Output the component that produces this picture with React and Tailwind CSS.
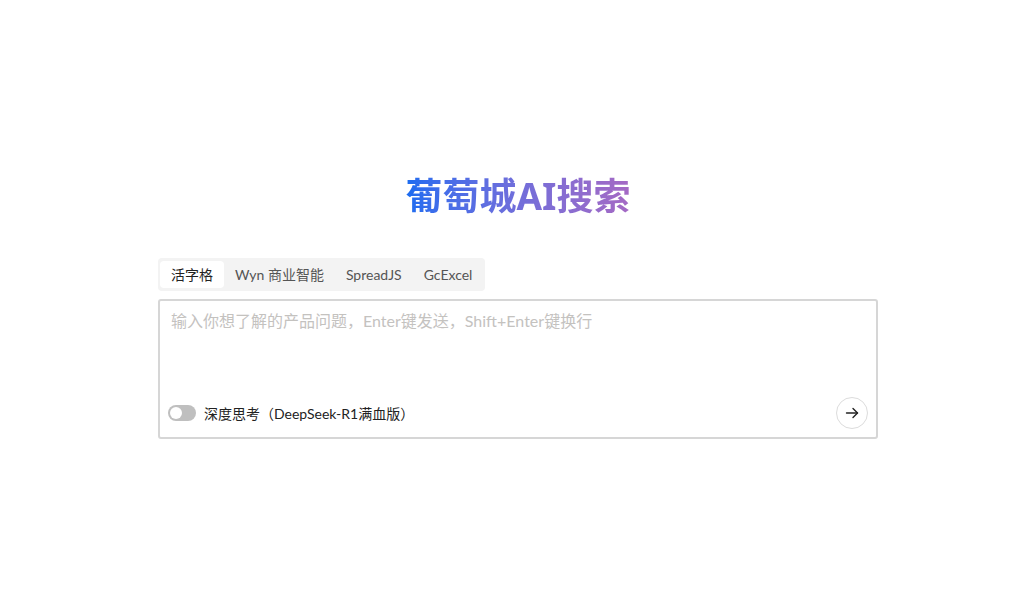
import React, { useState } from 'react';

const FONT = 'Lato, "Noto Sans CJK SC", sans-serif';
const TITLE_FONT = '"Noto Sans", "Noto Sans CJK SC", sans-serif';

const tabs = ['活字格', 'Wyn 商业智能', 'SpreadJS', 'GcExcel'];

export default function App() {
  const [active, setActive] = useState(0);
  const [deep, setDeep] = useState(false);

  return (
    <div className="min-h-screen w-full bg-white pl-[5px]" style={{ fontFamily: FONT }}>
      <div className="mx-auto flex w-[720px] flex-col pt-[169px]">
        <h1
          className="self-center bg-gradient-to-r from-[#1a6cf0] to-[#a569c4] bg-clip-text text-center text-[37px] font-bold leading-[54px] text-transparent"
          style={{ fontFamily: TITLE_FONT }}
        >
          葡萄城AI搜索
        </h1>

        <div className="mt-[35px] flex">
          <div className="flex items-center rounded-[4px] bg-[#f3f3f3] px-[2px] py-[3px]">
            {tabs.map((t, i) => (
              <button
                key={t}
                onClick={() => setActive(i)}
                className={
                  'h-[27px] rounded-[4px] px-[11px] text-[14px] leading-[27px] ' +
                  (i === active ? 'bg-white text-[#222]' : 'text-[#555]')
                }
              >
                {t}
              </button>
            ))}
          </div>
        </div>

        <div className="mt-[8px] flex h-[140px] flex-col rounded-[3px] border-2 border-[#d6d6d6] pt-[8px] pb-[8px]">
          <textarea
            className="w-full flex-1 resize-none border-0 bg-transparent px-[11px] text-[16px] leading-[24px] text-[#333] outline-none placeholder:text-[#c4c2bf]"
            placeholder="输入你想了解的产品问题，Enter键发送，Shift+Enter键换行"
          />
          <div className="flex items-center justify-between pl-[8px] pr-[8px]">
            <button className="flex items-center gap-[8px]" onClick={() => setDeep(!deep)}>
              <span
                className={
                  'relative h-[16px] w-[28px] rounded-full ' + (deep ? 'bg-[#1a6cf0]' : 'bg-[#bfbfbf]')
                }
              >
                <span
                  className={
                    'absolute top-[2px] h-[12px] w-[12px] rounded-full bg-white ' +
                    (deep ? 'left-[14px]' : 'left-[2px]')
                  }
                />
              </span>
              <span className="text-[14px] text-[#222]">深度思考（DeepSeek-R1满血版）</span>
            </button>
            <button className="flex h-[32px] w-[32px] items-center justify-center rounded-full border border-[#dcdcdc] bg-white">
              <svg width="16" height="16" viewBox="0 0 16 16" fill="none" stroke="#222" strokeWidth="1.4" strokeLinecap="round" strokeLinejoin="round">
                <path d="M2.5 8h11" />
                <path d="M9 3.5L13.5 8 9 12.5" />
              </svg>
            </button>
          </div>
        </div>
      </div>
    </div>
  );
}
